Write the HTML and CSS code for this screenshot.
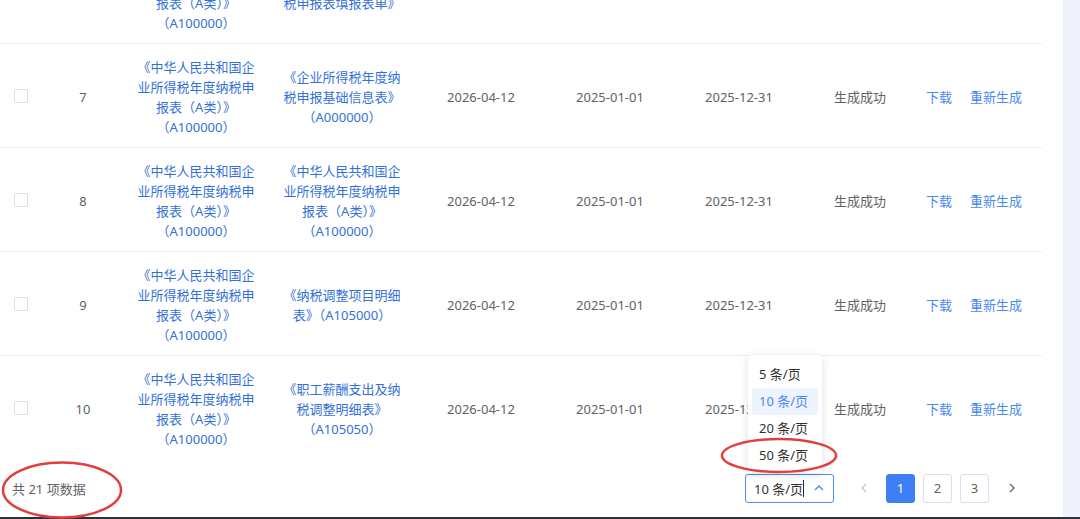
FILE: index.html
```html
<!DOCTYPE html>
<html lang="zh-CN">

<head>
    <meta charset="UTF-8">
    <meta name="viewport" content="width=device-width, initial-scale=1.0">
    <title>申报表生成记录</title>
    <link rel="stylesheet" href="styles.css">
</head>

<body>
    <div class="screen">
        <div class="card">
            <div class="table-wrap">
                <table class="grid">
                    <colgroup>
                        <col class="c-check">
                        <col class="c-no">
                        <col class="c-report">
                        <col class="c-sheet">
                        <col class="c-date">
                        <col class="c-date2">
                        <col class="c-date">
                        <col class="c-status">
                        <col class="c-ops">
                    </colgroup>
                    <tbody>
                        <tr>
                            <td><span class="chk"></span></td>
                            <td>6</td>
                            <td><a class="link">《中华人民共和国企业所得税年度纳税申报表（A类）》（A100000）</a></td>
                            <td><a class="link">《企业所得税年度纳税申报表填报表单》</a></td>
                            <td>2026-04-12</td>
                            <td>2025-01-01</td>
                            <td>2025-12-31</td>
                            <td>生成成功</td>
                            <td class="ops"><a>下载</a><a>重新生成</a></td>
                        </tr>
                        <tr>
                            <td><span class="chk"></span></td>
                            <td>7</td>
                            <td><a class="link">《中华人民共和国企业所得税年度纳税申报表（A类）》（A100000）</a></td>
                            <td><a class="link">《企业所得税年度纳税申报基础信息表》（A000000）</a></td>
                            <td>2026-04-12</td>
                            <td>2025-01-01</td>
                            <td>2025-12-31</td>
                            <td>生成成功</td>
                            <td class="ops"><a>下载</a><a>重新生成</a></td>
                        </tr>
                        <tr>
                            <td><span class="chk"></span></td>
                            <td>8</td>
                            <td><a class="link">《中华人民共和国企业所得税年度纳税申报表（A类）》（A100000）</a></td>
                            <td><a class="link">《中华人民共和国企业所得税年度纳税申报表（A类）》（A100000）</a></td>
                            <td>2026-04-12</td>
                            <td>2025-01-01</td>
                            <td>2025-12-31</td>
                            <td>生成成功</td>
                            <td class="ops"><a>下载</a><a>重新生成</a></td>
                        </tr>
                        <tr>
                            <td><span class="chk"></span></td>
                            <td>9</td>
                            <td><a class="link">《中华人民共和国企业所得税年度纳税申报表（A类）》（A100000）</a></td>
                            <td><a class="link">《纳税调整项目明细表》（A105000）</a></td>
                            <td>2026-04-12</td>
                            <td>2025-01-01</td>
                            <td>2025-12-31</td>
                            <td>生成成功</td>
                            <td class="ops"><a>下载</a><a>重新生成</a></td>
                        </tr>
                        <tr>
                            <td><span class="chk"></span></td>
                            <td>10</td>
                            <td><a class="link">《中华人民共和国企业所得税年度纳税申报表（A类）》（A100000）</a></td>
                            <td><a class="link">《职工薪酬支出及纳税调整明细表》（A105050）</a></td>
                            <td>2026-04-12</td>
                            <td>2025-01-01</td>
                            <td>2025-12-31</td>
                            <td>生成成功</td>
                            <td class="ops"><a>下载</a><a>重新生成</a></td>
                        </tr>
                    </tbody>
                </table>
            </div>

            <div class="pager">
                <span class="total">共 21 项数据</span>
                <div class="pager-right">
                    <div class="size-select">
                        <span>10 条/页</span><i class="caret"></i>
                        <svg class="arrow-up" width="10" height="6" viewBox="0 0 10 6">
                            <polyline points="1,5 5,1 9,5" fill="none" stroke="#5b8def" stroke-width="1.5" />
                        </svg>
                        <ul class="size-menu">
                            <li>5 条/页</li>
                            <li class="on">10 条/页</li>
                            <li>20 条/页</li>
                            <li>50 条/页</li>
                        </ul>
                    </div>
                    <button class="pg-arrow disabled">
                        <svg width="6" height="10" viewBox="0 0 6 10">
                            <polyline points="5,1 1,5 5,9" fill="none" stroke="currentColor" stroke-width="1.3" />
                        </svg>
                    </button>
                    <button class="pg-btn active">1</button>
                    <button class="pg-btn">2</button>
                    <button class="pg-btn">3</button>
                    <button class="pg-arrow">
                        <svg width="6" height="10" viewBox="0 0 6 10">
                            <polyline points="1,1 5,5 1,9" fill="none" stroke="currentColor" stroke-width="1.3" />
                        </svg>
                    </button>
                </div>
            </div>
        </div>
    </div>
    <div class="taskbar"></div>

    <!-- red marks drawn over the screenshot -->
    <svg class="marks" width="1080" height="519" viewBox="0 0 1080 519">
        <ellipse cx="779" cy="455.5" rx="57" ry="16.5" fill="none" stroke="#e0403d" stroke-width="2.5" />
        <ellipse cx="62" cy="490" rx="59" ry="27.5" fill="none" stroke="#e0403d" stroke-width="2.5" />
    </svg>
</body>

</html>
```

FILE: styles.css
```css
* {
    box-sizing: border-box;
}

body {
    margin: 0;
    height: 519px;
    overflow: hidden;
    display: flex;
    flex-direction: column;
    background-color: #f0f3fc;
    font-family: "Noto Sans", "Noto Sans CJK SC", sans-serif;
    font-size: 13px;
    color: #606266;
}

.screen {
    flex: 1;
    display: flex;
    min-height: 0;
}

.card {
    width: 1063px;
    padding-right: 21px;
    background-color: #fff;
    display: flex;
    flex-direction: column;
}

.table-wrap {
    height: 459px;
    overflow: hidden;
}

.grid {
    width: 1042px;
    margin-top: -60px;
    table-layout: fixed;
    border-collapse: separate;
    border-spacing: 0;
}

.c-check { width: 42px; }
.c-no { width: 82px; }
.c-report { width: 144px; }
.c-sheet { width: 148px; }
.c-date { width: 130px; }
.c-date2 { width: 128px; }
.c-status { width: 112px; }
.c-ops { width: 126px; }

.grid td {
    padding: 13px 12px 10px;
    line-height: 20px;
    text-align: center;
    vertical-align: middle;
    border-bottom: 1px solid #ebeef5;
}

.grid td:first-child {
    padding: 0;
}

.chk {
    display: block;
    width: 14px;
    height: 14px;
    margin: 0 auto;
    border: 1px solid #dcdfe6;
    border-radius: 2px;
    background: #fff;
}

.link {
    color: #3371d8;
}

.grid td.ops {
    text-align: left;
    padding-left: 10px;
    padding-right: 0;
}

.ops a {
    color: #4a87ee;
    margin-right: 18px;
}

.pager {
    height: 58px;
    display: flex;
    align-items: center;
    justify-content: space-between;
    padding: 0 16px 0 12px;
}

.total {
    color: #606266;
}

.pager-right {
    display: flex;
    align-items: center;
    gap: 8px;
}

.size-select {
    position: relative;
    width: 89px;
    height: 29px;
    margin-right: 7px;
    display: flex;
    align-items: center;
    padding-left: 8px;
    border: 1px solid #4b8bf4;
    border-radius: 3px;
    color: #303133;
}

.caret {
    width: 1px;
    height: 17px;
    background: #303133;
}

.arrow-up {
    margin-left: auto;
    margin-right: 9px;
}

.size-menu {
    position: absolute;
    left: 2px;
    bottom: calc(100% + 2px);
    width: 74px;
    margin: 0;
    padding: 6px 0 4px;
    list-style: none;
    background: #fff;
    border-radius: 4px;
    box-shadow: 0 2px 10px rgba(0, 0, 0, 0.12);
}

.size-menu li {
    height: 27px;
    line-height: 27px;
    margin: 0 4px;
    padding-left: 7px;
    border-radius: 3px;
    color: #303133;
}

.size-menu li.on {
    color: #4a87ee;
    background: #eef4ff;
}

.pg-btn,
.pg-arrow {
    width: 29px;
    height: 29px;
    padding: 0;
    font: inherit;
    border-radius: 3px;
    display: flex;
    align-items: center;
    justify-content: center;
    background: #fff;
}

.pg-btn {
    border: 1px solid #dcdfe6;
    color: #606266;
}

.pg-btn.active {
    background: #3e80f3;
    border-color: #3e80f3;
    color: #fff;
}

.pg-arrow {
    border: none;
    color: #606266;
}

.pg-arrow.disabled {
    color: #c0c4cc;
}

.taskbar {
    height: 2px;
    background: #2c313c;
}

.marks {
    position: absolute;
    left: 0;
    top: 0;
    pointer-events: none;
}
```
